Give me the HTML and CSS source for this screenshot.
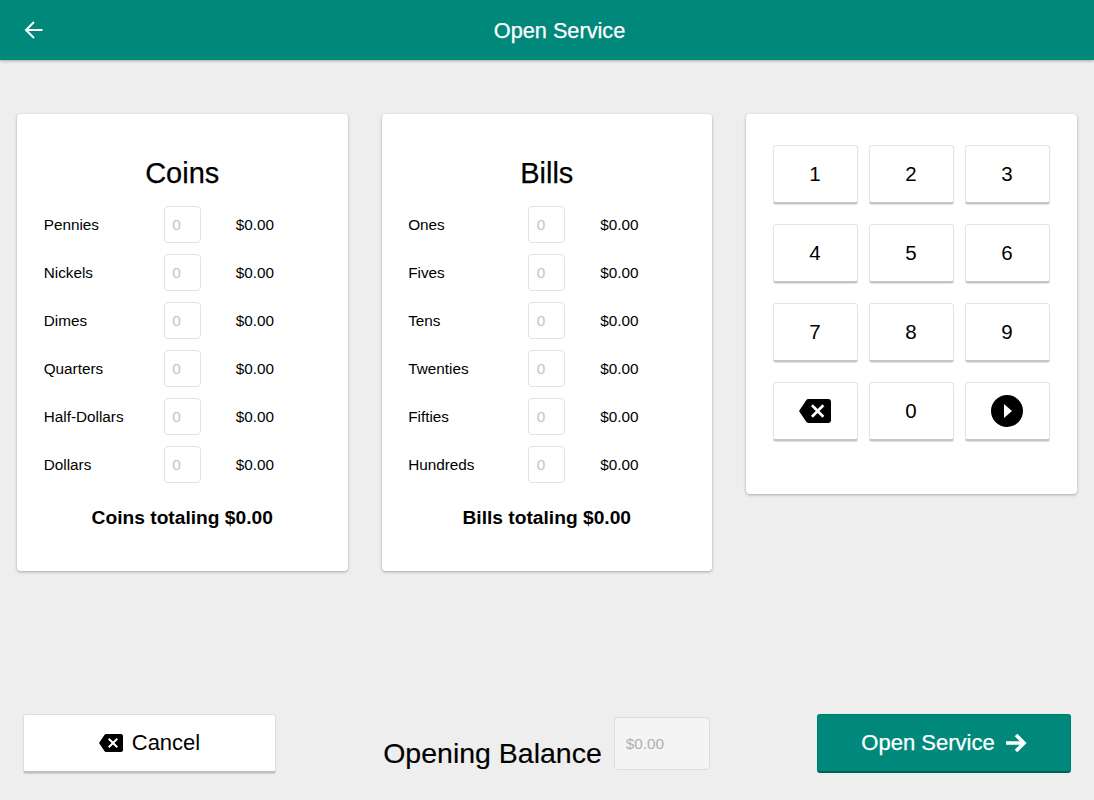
FILE: index.html
```html
<!DOCTYPE html>
<html lang="en">
<head>
<meta charset="utf-8">
<title>Open Service</title>
<link rel="stylesheet" href="styles.css">
</head>
<body>
<div class="page">
  <header class="topbar">
    <svg class="back" viewBox="0 0 20 20" width="20" height="20"><path d="M18.5 10H2.5M10 2L2 10l8 8" fill="none" stroke="#fff" stroke-width="2"/></svg>
    <h1 class="topbar-title">Open Service</h1>
  </header>
  <main class="panels">
    <section class="card count">
      <h2 class="count-title">Coins</h2>
      <div class="row"><span class="row-label">Pennies</span><input class="qty" placeholder="0"><span class="row-amt">$0.00</span></div>
      <div class="row"><span class="row-label">Nickels</span><input class="qty" placeholder="0"><span class="row-amt">$0.00</span></div>
      <div class="row"><span class="row-label">Dimes</span><input class="qty" placeholder="0"><span class="row-amt">$0.00</span></div>
      <div class="row"><span class="row-label">Quarters</span><input class="qty" placeholder="0"><span class="row-amt">$0.00</span></div>
      <div class="row"><span class="row-label">Half-Dollars</span><input class="qty" placeholder="0"><span class="row-amt">$0.00</span></div>
      <div class="row"><span class="row-label">Dollars</span><input class="qty" placeholder="0"><span class="row-amt">$0.00</span></div>
      <p class="total">Coins totaling $0.00</p>
    </section>
    <section class="card count">
      <h2 class="count-title">Bills</h2>
      <div class="row"><span class="row-label">Ones</span><input class="qty" placeholder="0"><span class="row-amt">$0.00</span></div>
      <div class="row"><span class="row-label">Fives</span><input class="qty" placeholder="0"><span class="row-amt">$0.00</span></div>
      <div class="row"><span class="row-label">Tens</span><input class="qty" placeholder="0"><span class="row-amt">$0.00</span></div>
      <div class="row"><span class="row-label">Twenties</span><input class="qty" placeholder="0"><span class="row-amt">$0.00</span></div>
      <div class="row"><span class="row-label">Fifties</span><input class="qty" placeholder="0"><span class="row-amt">$0.00</span></div>
      <div class="row"><span class="row-label">Hundreds</span><input class="qty" placeholder="0"><span class="row-amt">$0.00</span></div>
      <p class="total">Bills totaling $0.00</p>
    </section>
    <section class="card keypad">
      <button class="key">1</button><button class="key">2</button><button class="key">3</button>
      <button class="key">4</button><button class="key">5</button><button class="key">6</button>
      <button class="key">7</button><button class="key">8</button><button class="key">9</button>
      <button class="key" aria-label="Delete"><svg class="icon-del" viewBox="0 0 24 18" width="32" height="24"><path d="M22 0H7C6.310 0 5.770.35 5.410.88L0 9l5.410 8.110c.36.53.9.89 1.590.89h15c1.100 0 2-.9 2-2V2c0-1.100-.9-2-2-2zM19 12.590L17.590 14 14 10.410 10.410 14 9 12.590 12.590 9 9 5.410 10.410 4 14 7.590 17.590 4 19 5.410 15.410 9 19 12.590z"/></svg></button>
      <button class="key">0</button>
      <button class="key" aria-label="Next"><svg viewBox="0 0 32 32" width="32" height="32"><path fill-rule="evenodd" d="M16 0a16 16 0 1 0 0 32a16 16 0 1 0 0-32zM13 9L21 16 13 23z"/></svg></button>
    </section>
  </main>
  <footer class="actions">
    <button class="btn btn-cancel"><svg viewBox="0 0 24 18" width="24" height="18"><path d="M22 0H7C6.310 0 5.770.35 5.410.88L0 9l5.410 8.110c.36.53.9.89 1.590.89h15c1.100 0 2-.9 2-2V2c0-1.100-.9-2-2-2zM19 12.590L17.590 14 14 10.410 10.410 14 9 12.590 12.590 9 9 5.410 10.410 4 14 7.590 17.590 4 19 5.410 15.410 9 19 12.590z"/></svg>Cancel</button>
    <div class="balance">
      <span class="balance-label">Opening Balance</span>
      <input class="balance-input" placeholder="$0.00" disabled>
    </div>
    <button class="btn btn-open">Open Service<svg viewBox="0 0 22 20" width="22" height="20"><path d="M1 10H19M11 2l8 8-8 8" fill="none" stroke="#fff" stroke-width="3.600"/></svg></button>
  </footer>
</div>
</body>
</html>
```
FILE: styles.css
```css
* { box-sizing: border-box; }
html, body { margin: 0; padding: 0; }
body { background: #eeeeee; color: #000; font-family: "Liberation Sans", Arial, sans-serif; }
.page { height: 800px; display: flex; flex-direction: column; overflow: hidden; }

.topbar { height: 60px; flex: none; background: #00897b; box-shadow: 0 1px 3px rgba(0,0,0,.3); display: flex; align-items: center; padding-left: 24px; }
.back { display: block; flex: none; }
.topbar-title { flex: 1; margin: 2px 0 0 -20px; padding-left: 1px; text-align: center; color: #fff; font-size: 21.700px; font-weight: 400; -webkit-text-stroke: .25px #fff; }

.panels { display: grid; grid-template-columns: repeat(3, 1fr); gap: 34px; align-items: start; padding: 54px 17px 0; }
.card { background: #fff; border-radius: 4px; box-shadow: 0 1px 3px rgba(0,0,0,.3); }

.count { height: 457px; padding: 43px 26.700px 0; }
.count-title { margin: 0 0 16px; height: 33px; line-height: 33px; text-align: center; font-size: 29px; font-weight: 400; -webkit-text-stroke: .25px #000; }
.row { height: 37px; margin-bottom: 11px; display: grid; grid-template-columns: 120px 37px 1fr; align-items: center; font-size: 15.300px; }
.row-amt { padding-left: 35px; }
.qty { width: 37px; height: 37px; border: 1px solid #e2e2e2; border-radius: 4px; background: #fff; padding: 0 0 0 7.500px; font: 15.300px "Liberation Sans", Arial, sans-serif; }
.qty::placeholder { color: #c4c4c4; opacity: 1; }
.total { margin: 24px 0 0; text-align: center; font-size: 19.200px; font-weight: 700; }

.keypad { height: 380px; padding: 31px 27px 0; display: grid; grid-template-columns: repeat(3, 85px); grid-auto-rows: 59px; column-gap: 11px; row-gap: 20px; }
.key { padding: 0 1px 0 0; background: #fff; border: 1px solid #e4e4e4; border-bottom: 2px solid #c4c4c4; border-radius: 3px; box-shadow: 0 1px 1px rgba(0,0,0,.12); font: 20.500px "Liberation Sans", Arial, sans-serif; color: #000; display: flex; align-items: center; justify-content: center; }

.actions { margin-top: auto; padding: 0 23px 27px; display: flex; align-items: flex-end; }
.btn { width: 254px; height: 59px; display: flex; align-items: center; justify-content: center; border-radius: 3px; font: 22px "Liberation Sans", Arial, sans-serif; padding: 0; }
.btn-cancel { background: #fff; border: 1px solid #dedede; border-bottom: 2px solid #c0c0c0; box-shadow: 0 1px 1px rgba(0,0,0,.12); color: #000; gap: 9px; width: 253px; }
.btn-open { background: #00897b; border: 1px solid #007a6d; border-bottom: 2px solid #006155; color: #fff; gap: 10px; -webkit-text-stroke: .25px #fff; }
.balance { flex: 1; display: flex; align-items: flex-end; justify-content: center; gap: 12px; padding: 0 107px 3px 107px; white-space: nowrap; }
.balance-label { font-size: 28.500px; line-height: 33px; -webkit-text-stroke: .15px #000; }
.balance-input { width: 96px; height: 53px; flex: none; border: 1px solid #dcdcdc; border-radius: 4px; background: #f4f4f4; padding: 0 0 0 11px; font: 15.300px "Liberation Sans", Arial, sans-serif; }
.balance-input::placeholder { color: #b0b0b0; opacity: 1; }
```
